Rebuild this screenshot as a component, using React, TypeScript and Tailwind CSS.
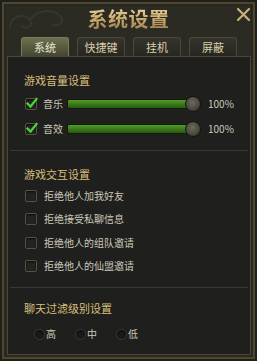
import React from "react";

const font = { fontFamily: '"Noto Sans CJK SC", "Noto Sans", sans-serif' };

function Check({ checked }: { checked: boolean }) {
  return (
    <div className="relative w-[12px] h-[12px] shrink-0 rounded-[2px] border border-[#57523f] bg-[#23231f] shadow-[inset_0_1px_2px_rgba(0,0,0,0.7)]">
      {checked && (
        <svg className="absolute -left-[1px] -top-[2px]" width="14" height="13" viewBox="0 0 14 13">
          <path d="M2.5 6.5 L5.5 9.5 L11.5 2" fill="none" stroke="#46d83a" strokeWidth="2.2" strokeLinecap="square" />
        </svg>
      )}
    </div>
  );
}

function Slider({ label }: { label: string }) {
  return (
    <div className="flex items-center h-[20px] pl-[17px]">
      <Check checked />
      <span className="ml-[6px] w-[24px] text-[10px] leading-[12px] text-[#cbc8ba]">{label}</span>
      <div className="relative w-[134px] h-[16px] flex items-center">
        <div className="w-[128px] h-[10px] rounded-[2px] border border-[#121a0c] bg-gradient-to-b from-[#549c28] via-[#3c7a1a] to-[#285a10]" />
        <div className="absolute right-0 top-0 w-[16px] h-[16px] rounded-full border border-[#16160f] bg-[radial-gradient(circle_at_45%_40%,#6e6a5c,#4a473d_60%,#34322b)]" />
      </div>
      <span className="ml-[7px] text-[10px] leading-[12px] text-[#cbc8ba]">100%</span>
    </div>
  );
}

function Option({ label }: { label: string }) {
  return (
    <div className="flex items-center h-[23.5px] pl-[17px]">
      <Check checked={false} />
      <span className="ml-[7px] text-[10px] leading-[12px] text-[#cbc8ba]">{label}</span>
    </div>
  );
}

function Radio({ label }: { label: string }) {
  return (
    <div className="flex items-center w-[41px]">
      <div className="w-[11px] h-[11px] rounded-full border border-[#3a3a33] bg-[#1a1a17] shadow-[inset_0_1px_2px_rgba(0,0,0,0.8)]" />
      <span className="ml-[1px] text-[10px] leading-[12px] text-[#cbc8ba]">{label}</span>
    </div>
  );
}

function Heading({ children }: { children: React.ReactNode }) {
  return (
    <div className="pl-[16px] h-[16px] text-[11px] leading-[16px] text-[#d8bf7c]">{children}</div>
  );
}

export default function App() {
  const tabs = ["系统", "快捷键", "挂机", "屏蔽"];
  return (
    <div
      style={font}
      className="relative w-[257px] h-[361px] flex flex-col bg-[#2b2a23] shadow-[inset_0_0_0_2px_#201f19,inset_0_0_0_4px_#4f4630,inset_0_0_0_6px_#29281f] overflow-hidden"
    >
      <svg className="absolute left-[6px] top-[2px] opacity-40" width="70" height="34" viewBox="0 0 70 34">
        <path d="M4 26 C4 14 18 10 24 18 C28 24 20 28 16 24 M24 18 C30 8 46 6 54 14 C60 20 52 26 46 22" fill="none" stroke="#4a4838" strokeWidth="2" />
      </svg>
      <div className="relative h-[37px] flex items-center justify-center">
        <span className="text-[20px] leading-[24px] font-semibold tracking-[0.5px] bg-gradient-to-b from-[#ead3a0] via-[#c9ab6c] to-[#9a7d48] bg-clip-text text-transparent">
          系统设置
        </span>
        <svg className="absolute right-[6px] top-[7px]" width="15" height="15" viewBox="0 0 15 15">
          <path d="M2 2 L13 13 M13 2 L2 13" stroke="#c9b078" strokeWidth="2.2" strokeLinecap="round" />
        </svg>
      </div>
      <div className="h-[19px] flex items-end pl-[21px] gap-[8px]">
        {tabs.map((t, i) => (
          <div
            key={t}
            className={
              i === 0
                ? "w-[48px] h-[19px] flex items-center justify-center rounded-t-[3px] border border-b-0 border-[#7a7a58] bg-gradient-to-b from-[#6e7150] to-[#444731] text-[11px] leading-[14px] text-[#ece6d0]"
                : "w-[48px] h-[19px] flex items-center justify-center rounded-t-[3px] border border-b-0 border-[#4b4838] bg-gradient-to-b from-[#35342c] to-[#27261f] text-[11px] leading-[14px] text-[#dacfae]"
            }
          >
            {t}
          </div>
        ))}
      </div>
      <div className="mx-[7px] h-[299px] w-[244px] border border-[#4a4535] bg-[#1f1f1d] flex flex-col">
        <div className="h-[93px] flex flex-col">
          <div className="h-[15px]" />
          <Heading>游戏音量设置</Heading>
          <div className="h-[6px]" />
          <Slider label="音乐" />
          <div className="h-[5px]" />
          <Slider label="音效" />
        </div>
        <div className="mx-[2px] h-[1px] bg-[#3a3830]" />
        <div className="h-[136px] flex flex-col">
          <div className="h-[15px]" />
          <Heading>游戏交互设置</Heading>
          <div className="h-[2px]" />
          <Option label="拒绝他人加我好友" />
          <Option label="拒绝接受私聊信息" />
          <Option label="拒绝他人的组队邀请" />
          <Option label="拒绝他人的仙盟邀请" />
        </div>
        <div className="mx-[2px] h-[1px] bg-[#3a3830]" />
        <div className="flex flex-col">
          <div className="h-[12px]" />
          <Heading>聊天过滤级别设置</Heading>
          <div className="h-[10px]" />
          <div className="flex pl-[26px] h-[16px] items-center">
            <Radio label="高" />
            <Radio label="中" />
            <Radio label="低" />
          </div>
        </div>
      </div>
    </div>
  );
}
